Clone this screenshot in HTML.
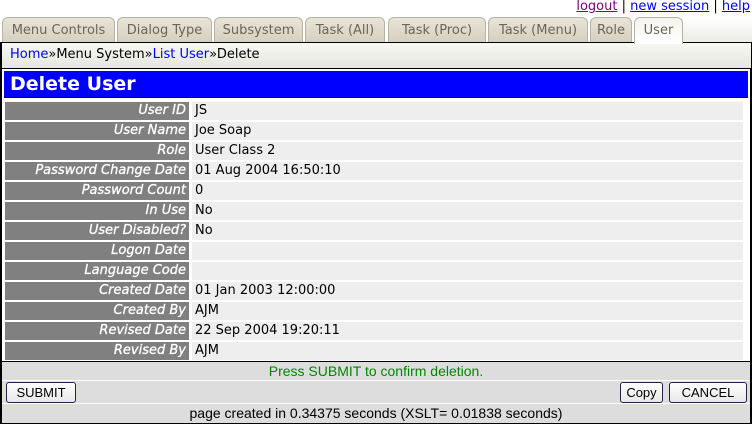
<!DOCTYPE html>
<html><head><meta charset="utf-8"><style>
*{box-sizing:border-box;margin:0;padding:0}
body{width:752px;height:424px;background:#fff;font-family:"DejaVu Sans","Liberation Sans",sans-serif;font-size:12px;position:relative;overflow:hidden;color:#000}
.top{position:absolute;right:2px;top:-1px;font-size:13px;color:#000}
.top a{color:#00f;text-decoration:underline}
.top a.v{color:#800080}
.tab{position:absolute;top:17px;height:26px;background:linear-gradient(#e8e4d8,#d4cfbd);border:1px solid #b8b2a0;border-bottom:none;border-radius:6px 6px 0 0;color:#6b6555;font-size:13px;line-height:25px;text-align:center}
.tab.act{background:linear-gradient(#f4f4ee,#fff);color:#6b6555;height:27px;z-index:2}
.tabbg{position:absolute;top:17px;left:683px;right:0;height:26px;background:linear-gradient(#fff,#ecece4)}
.crumb{position:absolute;top:42px;left:0;width:752px;height:27px;border:1px solid #000;border-left-width:2px;background:linear-gradient(#f8f8f4,#e6e6de);font-size:13px;line-height:24px;padding-left:8px}
.crumb a{color:#00f;text-decoration:none}
.main{position:absolute;top:68px;left:0;width:752px;height:356px;border:2px solid #000;border-top:1px solid #000;background:#fff}
.hdr{position:absolute;top:2px;left:2px;right:2px;height:27px;background:#00f;color:#fff;font-weight:bold;font-size:19px;line-height:27px;padding-left:6px;border-bottom:1px solid #000}
.row{position:absolute;left:3px;width:738px;height:18px;font-size:13px;line-height:18px}
.row .l{position:absolute;left:0;width:184px;height:18px;background:#808080;color:#fff;font-style:italic;text-align:right;padding-right:3px;-webkit-text-stroke:0.3px #fff}
.row .v{position:absolute;left:187px;right:0;height:18px;background:#eee;padding-left:3px}
.msg{position:absolute;top:292px;left:0;right:0;height:19px;background:#ddd;border-top:1px solid #000;color:#080;text-align:center;font-family:"Liberation Sans",sans-serif;font-size:14px;line-height:19px}
.btns{position:absolute;top:312px;left:0;right:0;height:22px;background:#ddd}
.btn{position:absolute;top:1px;height:21px;border:1px solid #224;border-radius:3px;background:linear-gradient(#fff,#e8e8e8);font-family:"Liberation Sans",sans-serif;font-size:13px;line-height:19px;text-align:center}
.foot{position:absolute;top:335px;left:0;right:0;height:19px;background:#ddd;text-align:center;font-family:"Liberation Sans",sans-serif;font-size:14px;line-height:19px}
</style></head><body>
<div class="top"><a class="v">logout</a> | <a>new session</a> | <a>help</a></div>
<div class="tabbg"></div>
<div class="tab" style="left:2px;width:113px">Menu Controls</div>
<div class="tab" style="left:117px;width:95px">Dialog Type</div>
<div class="tab" style="left:214px;width:89px">Subsystem</div>
<div class="tab" style="left:305px;width:80px">Task (All)</div>
<div class="tab" style="left:388px;width:98px">Task (Proc)</div>
<div class="tab" style="left:488px;width:100px">Task (Menu)</div>
<div class="tab" style="left:590px;width:42px">Role</div>
<div class="tab act" style="left:634px;width:49px">User</div>
<div class="crumb"><a>Home</a>»Menu System»<a>List User</a>»Delete</div>
<div class="main">
<div class="hdr">Delete User</div>
<div class="row" style="top:33px"><div class="l">User ID</div><div class="v">JS</div></div>
<div class="row" style="top:53px"><div class="l">User Name</div><div class="v">Joe Soap</div></div>
<div class="row" style="top:73px"><div class="l">Role</div><div class="v">User Class 2</div></div>
<div class="row" style="top:93px"><div class="l">Password Change Date</div><div class="v">01 Aug 2004 16:50:10</div></div>
<div class="row" style="top:113px"><div class="l">Password Count</div><div class="v">0</div></div>
<div class="row" style="top:133px"><div class="l">In Use</div><div class="v">No</div></div>
<div class="row" style="top:153px"><div class="l">User Disabled?</div><div class="v">No</div></div>
<div class="row" style="top:173px"><div class="l">Logon Date</div><div class="v"></div></div>
<div class="row" style="top:193px"><div class="l">Language Code</div><div class="v"></div></div>
<div class="row" style="top:213px"><div class="l">Created Date</div><div class="v">01 Jan 2003 12:00:00</div></div>
<div class="row" style="top:233px"><div class="l">Created By</div><div class="v">AJM</div></div>
<div class="row" style="top:253px"><div class="l">Revised Date</div><div class="v">22 Sep 2004 19:20:11</div></div>
<div class="row" style="top:273px"><div class="l">Revised By</div><div class="v">AJM</div></div>
<div class="msg">Press SUBMIT to confirm deletion.</div>
<div class="btns">
<div class="btn" style="left:4px;width:70px">SUBMIT</div>
<div class="btn" style="left:618px;width:43px">Copy</div>
<div class="btn" style="left:667px;width:78px">CANCEL</div>
</div>
<div class="foot">page created in 0.34375 seconds (XSLT= 0.01838 seconds)</div>
</div>
</body></html>
